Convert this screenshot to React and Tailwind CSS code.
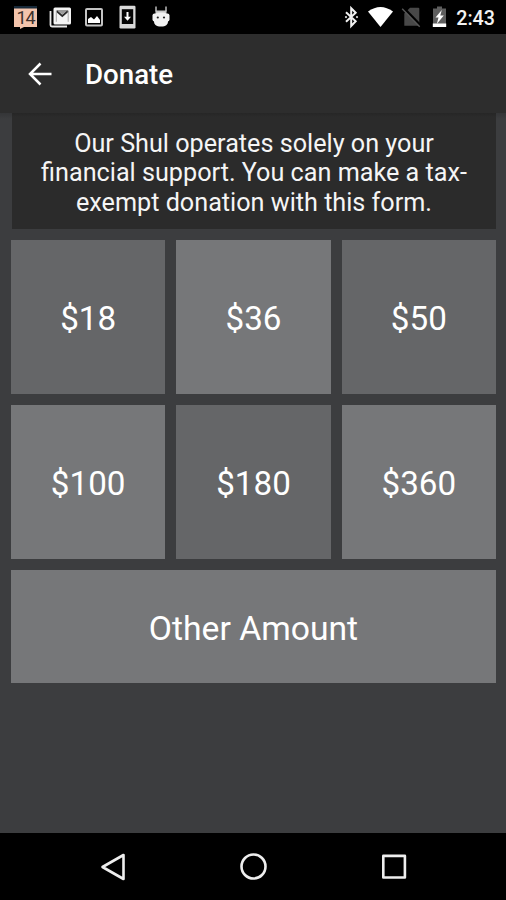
import React from 'react';

const amounts = [
  { label: '$18', color: 'bg-[#656668]' },
  { label: '$36', color: 'bg-[#767779]' },
  { label: '$50', color: 'bg-[#656668]' },
  { label: '$100', color: 'bg-[#767779]' },
  { label: '$180', color: 'bg-[#656668]' },
  { label: '$360', color: 'bg-[#767779]' },
];

const StatusBar = () => (
  <div className="flex h-[34px] shrink-0 items-center justify-between bg-black pl-[13px] pr-[11px]">
    <div className="flex items-center">
      {/* calendar bubble */}
      <div className="relative h-6 w-[25px]">
        <svg className="h-6 w-[25px]" viewBox="0 0 25 24">
          <path d="M1 1h23v21H11l-4 2v-2H1z" fill="#f3c4ac" />
          <path d="M1 1h23v2.5H1z" fill="#182a3a" />
        </svg>
        <span className="absolute inset-x-0 top-[3px] text-center text-[18px] leading-[19px] tracking-[-1px] text-[#3d302c]">14</span>
      </div>
      {/* mail */}
      <svg className="ml-[11px] h-6 w-[23px]" viewBox="0 0 23 24">
        <path d="M1.5 6v14q0 1.5 1.5 1.5h15" fill="none" stroke="#e8e8e8" strokeWidth="1.8" />
        <rect x="4.5" y="2.5" width="17.5" height="17" rx="1.5" fill="#f4f4f4" />
        <path d="M7.5 5h11.5l-5.7 4.2z" fill="#9b9b9b" />
        <path d="M7.5 6l5.8 5L19 6" fill="none" stroke="#2b2b2b" strokeWidth="1.7" />
        <path d="M7.3 5.5v11.3M19.2 5.5v11.3" stroke="#a5a5a5" strokeWidth="1" />
      </svg>
      {/* picture */}
      <svg className="ml-[13px] h-6 w-[18px]" viewBox="0 0 18 24">
        <rect x="1" y="4" width="16" height="16.5" rx="1" fill="none" stroke="#c4c4c4" strokeWidth="2" />
        <path d="M3 18v-4l3-2 3 2.5 3-3.5 3 4v3z" fill="#fff" />
      </svg>
      {/* download to device */}
      <svg className="ml-4 h-6 w-[17px]" viewBox="0 0 17 24">
        <rect x="0.5" y="0.8" width="16" height="22.7" rx="1.2" fill="#d9d9d9" />
        <rect x="2.8" y="4.2" width="11.4" height="14.8" fill="#050505" />
        <path d="M8.5 7v6" stroke="#fff" strokeWidth="2" />
        <path d="M5 11.8h7l-3.5 4z" fill="#fff" />
      </svg>
      {/* robot head */}
      <svg className="ml-4 h-6 w-[18px]" viewBox="0 0 18 24">
        <path d="M4 1.5v5M14 1.5v5" stroke="#b9b9b9" strokeWidth="1.5" />
        <path d="M3.5 5.5h11v4h-11z" fill="#c9c9c9" />
        <rect x="0.5" y="8.5" width="17" height="8" rx="2" fill="#f2f2f2" />
        <rect x="2" y="7.5" width="14" height="14" rx="5" fill="#f2f2f2" />
        <circle cx="5.8" cy="12.5" r="1.1" fill="#222" />
        <circle cx="12" cy="12.5" r="1.1" fill="#222" />
      </svg>
    </div>
    <div className="flex items-center">
      {/* bluetooth */}
      <svg className="h-6 w-[15px]" viewBox="0 0 15 24">
        <path d="M2 7.2l9.7 9L7.2 21V3.2l4.5 4.6L2 16.8" fill="none" stroke="#f2f2f2" strokeWidth="2" />
        <circle cx="2" cy="12.1" r="1.1" fill="#ddd" />
        <circle cx="13" cy="12.1" r="1.1" fill="#ddd" />
      </svg>
      {/* wifi */}
      <svg className="ml-2 h-6 w-[27px]" viewBox="0 0 27 24">
        <path d="M1 6.5Q13.5-2.5 26 6.5L13.5 22z" fill="#fff" />
      </svg>
      {/* no sim */}
      <svg className="ml-[7px] h-6 w-[20px]" viewBox="0 0 20 24">
        <path d="M9 2.8h8.3q1 0 1 1v17h-15V8.5z" fill="#484848" />
        <path d="M2.8 3.2l17 17.5" stroke="#000" strokeWidth="2.6" />
        <path d="M1.2 3.8l17.5 18" stroke="#575757" strokeWidth="1.4" />
      </svg>
      {/* charging battery */}
      <svg className="ml-[11px] h-6 w-[15px]" viewBox="0 0 15 24">
        <path d="M5 1.5h5v2h4V19H1V3.5h4z" fill="#5e5e5e" />
        <path d="M.8 18.5h13.4V22H.8z" fill="#fff" />
        <path d="M9.8 5L3.5 12.6h3L4.8 19l7-8.4H8.3z" fill="#fff" />
      </svg>
      <span className="ml-[9px] mt-[3px] text-[19.7px] font-medium leading-6 text-[#f2f2f2]">2:43</span>
    </div>
  </div>
);

const NavBar = () => (
  <div className="flex h-[67px] shrink-0 items-center justify-between bg-black pl-[100px] pr-[98px]">
    <svg className="h-7 w-7" viewBox="0 0 28 28" fill="none" stroke="#eee" strokeWidth="2.6" strokeLinejoin="round">
      <path d="M2.5 14L23.5 2v24z" />
    </svg>
    <svg className="h-7 w-7" viewBox="0 0 28 28" fill="none" stroke="#eee" strokeWidth="2.6">
      <circle cx="13.5" cy="13.5" r="12" />
    </svg>
    <svg className="h-7 w-7" viewBox="0 0 28 28" fill="none" stroke="#eee" strokeWidth="2.6" strokeLinejoin="round">
      <path d="M3.3 2.9h21.6v21.6H3.3z" />
    </svg>
  </div>
);

const App = () => {
  return (
    <div className="flex h-[900px] w-[506px] flex-col overflow-hidden bg-[#3c3d3f] font-['Roboto',sans-serif]">
      <StatusBar />

      <header className="flex h-[79px] shrink-0 items-center bg-[#2d2d2d] pl-[28px]">
        <svg className="h-6 w-6" viewBox="0 0 24 24" fill="none" stroke="#fff" strokeWidth="2.5">
          <path d="M23.5 12H2M12.5 1.5L2 12l10.5 10.5" />
        </svg>
        <h1 className="ml-[33px] mt-[3px] text-[27.7px] font-medium leading-8 text-white">Donate</h1>
      </header>

      <main className="flex flex-1 flex-col bg-linear-to-b from-[#343537] to-[#3c3d3f] to-[6px] pl-[11px] pr-[10px]">
        <p className="ml-px h-[116px] bg-linear-to-b from-[#262626] to-[#2b2b2b] to-[4px] pt-[15.5px] text-center text-[25.2px] leading-[29.5px] text-[#f5f5f5]">
          Our Shul operates solely on your<br />
          financial support. You can make a tax-<br />
          exempt donation with this form.
        </p>

        <div className="mt-[11px] grid grid-cols-3 gap-[11px]">
          {amounts.map((item) => (
            <button
              key={item.label}
              type="button"
              className={`h-[154px] pt-[3px] text-[33.2px] leading-[50px] text-white ${item.color}`}
            >
              {item.label}
            </button>
          ))}
        </div>

        <button type="button" className="mt-[11px] h-[113px] bg-[#767779] pt-[5px] text-[33.7px] text-white">
          Other Amount
        </button>
      </main>

      <NavBar />
    </div>
  );
};

export default App;
